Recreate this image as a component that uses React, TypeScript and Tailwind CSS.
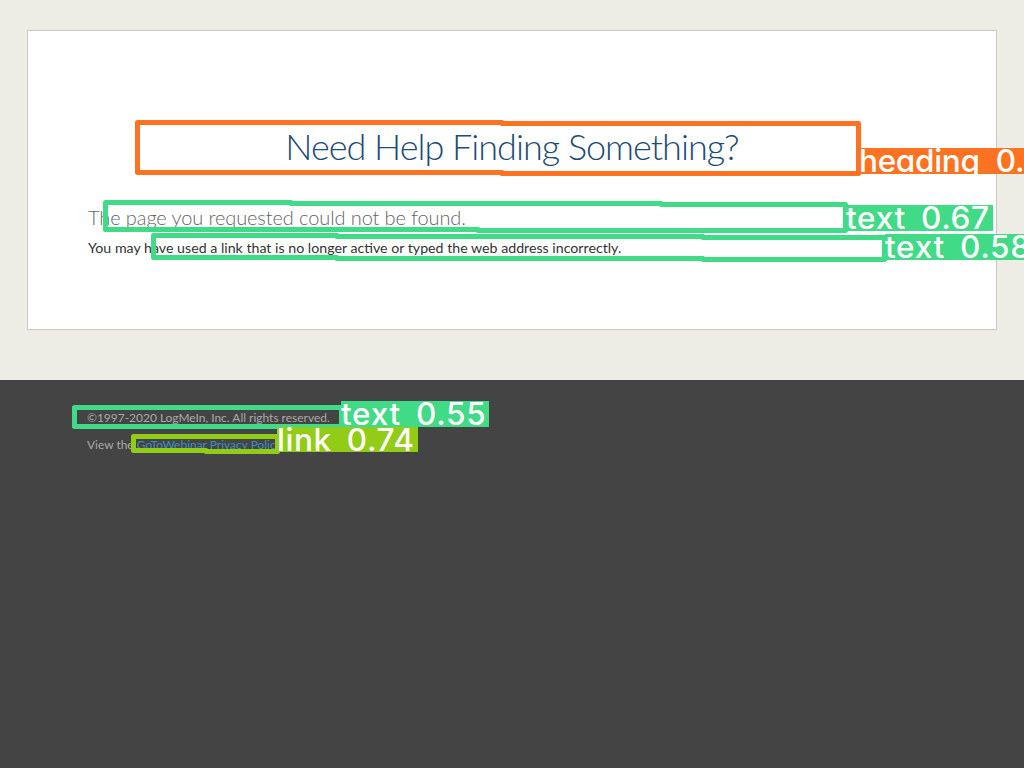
const outlines = [
  { color: '#ff7221', d: 'M137.5 122.5H502V123.5H858.5V173.5H502V172.5H137.5Z' },
  { color: '#41da86', d: 'M105.5 202.5H291V203.5H661V204.5H845.5V230.5H478V229.5H105.5Z' },
  { color: '#41da86', d: 'M153.5 235.5H337V236.5H703V237.5H884.5V259.5H703V258.5H337V257.5H153.5Z' },
  { color: '#41da86', d: 'M74.5 407.5H341.5V426.5H74.5Z' },
  { color: '#92cc17', d: 'M133.5 436.5H277.5V451.5H206V450.5H133.5Z' },
];

const labels = [
  { text: 'heading 0.', box: 'left-[859px] top-[148px] w-[165px] h-[26px] bg-[#ff7221] tracking-[-0.3px] [word-spacing:8px]' },
  { text: 'text 0.67', box: 'left-[846px] top-[205px] w-[147px] h-[26px] bg-[#41da86] tracking-[0.7px] [word-spacing:6px]' },
  { text: 'text 0.58', box: 'left-[885px] top-[234px] w-[139px] h-[26px] bg-[#41da86] tracking-[0.7px] [word-spacing:6px]' },
  { text: 'text 0.55', box: 'left-[341px] top-[401px] w-[148px] h-[26px] bg-[#41da86] tracking-[0.7px] [word-spacing:6px]' },
  { text: 'link 0.74', box: 'left-[277px] top-[427px] w-[141px] h-[25px] bg-[#92cc17] tracking-[0.6px] [word-spacing:6px]' },
];

function Annotations() {
  return (
    <div className="pointer-events-none absolute inset-0 overflow-hidden">
      <svg className="absolute inset-0" width="1024" height="768" viewBox="0 0 1024 768" fill="none">
        {outlines.map((o) => (
          <path key={o.d} d={o.d} stroke={o.color} strokeWidth="5" strokeLinejoin="round" />
        ))}
      </svg>
      {labels.map((l) => (
        <div
          key={l.text}
          className={`absolute overflow-hidden whitespace-nowrap font-['Inter',sans-serif] text-[31.5px] leading-[26px] font-medium text-white [font-feature-settings:'cv11'] ${l.box}`}
        >
          {l.text}
        </div>
      ))}
    </div>
  );
}

export default function App() {
  return (
    <div className="relative flex h-[768px] w-[1024px] flex-col overflow-hidden bg-[#edece5] font-['Lato',sans-serif]">
      <main className="h-[380px] pt-[30px] pr-[27px] pl-[27px]">
        <section className="h-[300px] border border-[#c8c8c8] bg-white px-[60px] pt-[90px]">
          <h1 className="text-center text-[36px] leading-[50px] font-light tracking-[-1px] text-[#1c4b73]">
            Need Help Finding Something?
          </h1>
          <p className="mt-[31px] text-[20px] leading-[30px] font-light tracking-[-0.1px] text-[#666]">
            The page you requested could not be found.
          </p>
          <p className="mt-[6px] text-[14.2px] leading-[20px] text-[#333]">
            You may have used a link that is no longer active or typed the web address incorrectly.
          </p>
        </section>
      </main>
      <footer className="flex-1 bg-[#444] px-[87px] pt-[28px] text-[11.96px] leading-[20px] text-[#aaa]">
        <p>©1997-2020 LogMeIn, Inc. All rights reserved.</p>
        <p className="mt-[7px]">
          View the <a className="text-[#3d8fc0]">GoToWebinar Privacy Policy</a>
        </p>
      </footer>
      <Annotations />
    </div>
  );
}
